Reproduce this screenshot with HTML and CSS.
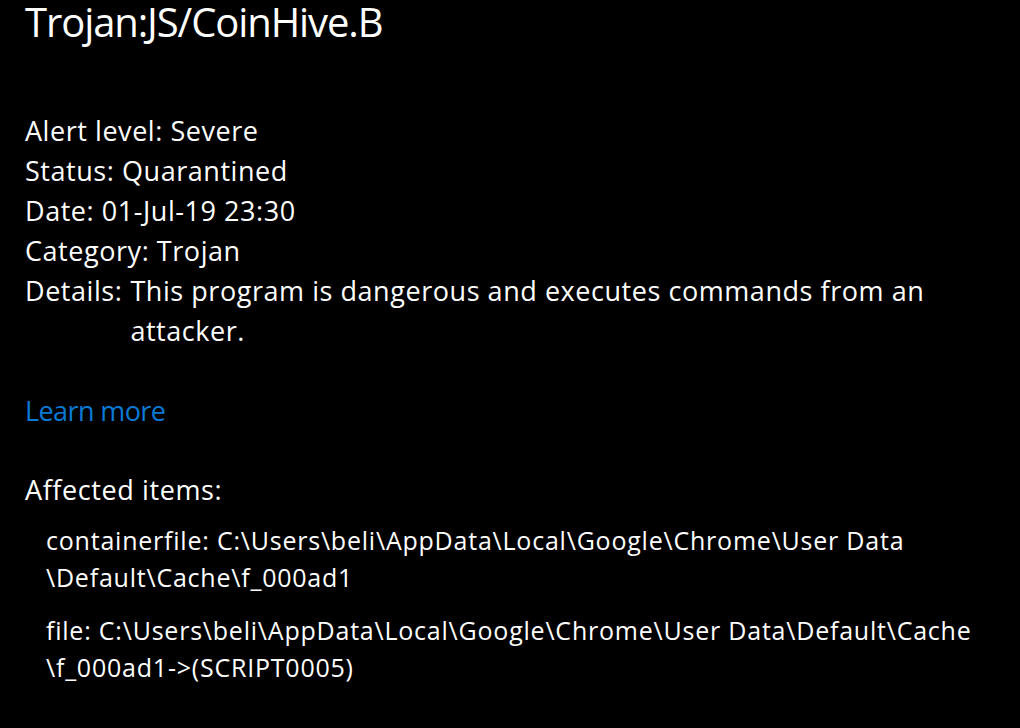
FILE: index.html
```html
<!DOCTYPE html>
<html lang="en">
<head>
<meta charset="utf-8">
<title>Trojan:JS/CoinHive.B</title>
<link rel="stylesheet" href="styles.css">
</head>
<body>
<main class="page">
  <h1 class="title">Trojan:JS/CoinHive.B</h1>
  <section class="facts">
    <div class="fact">Alert level: Severe</div>
    <div class="fact">Status: Quarantined</div>
    <div class="fact">Date: 01-Jul-19 23:30</div>
    <div class="fact">Category: Trojan</div>
    <div class="fact fact-details">
      <span class="fact-label">Details:</span>
      <span class="fact-value">This program is dangerous and executes commands from an attacker.</span>
    </div>
  </section>
  <a class="learn" href="#">Learn more</a>
  <h2 class="affected">Affected items:</h2>
  <ul class="items">
    <li class="item">containerfile: C:\Users\beli\AppData\Local\Google\Chrome\User&nbsp;Data<wbr>\Default\Cache\f_000ad1</li>
    <li class="item">file: C:\Users\beli\AppData\Local\Google\Chrome\User&nbsp;Data\Default\Cache<wbr>\f_000ad1-&gt;(SCRIPT0005)</li>
  </ul>
</main>
</body>
</html>
```

FILE: styles.css
```css
html, body {
  margin: 0;
  padding: 0;
  background: #000;
}

body {
  color: #fff;
  font-family: "Open Sans", "Noto Sans", sans-serif;
  width: 1020px;
  height: 728px;
  overflow: hidden;
}

.page {
  padding-left: 25px;
  display: flex;
  flex-direction: column;
  align-items: flex-start;
}

.title {
  margin: 0;
  font-size: 40px;
  line-height: 44px;
  font-weight: 400;
  letter-spacing: -1.1px;
}

.facts {
  margin-top: 67px;
  font-size: 27px;
  line-height: 40px;
  letter-spacing: 0.55px;
}

.fact-details {
  display: flex;
  gap: 8px;
}

.fact-value {
  width: 850px;
}

.learn {
  margin-top: 40px;
  font-size: 27px;
  line-height: 40px;
  letter-spacing: -0.6px;
  color: #0a7ad6;
  text-decoration: none;
}

.affected {
  margin: 39px 0 0 0;
  font-size: 27px;
  line-height: 40px;
  font-weight: 400;
  letter-spacing: 0.6px;
}

.items {
  list-style: none;
  margin: 12px 0 0 0;
  padding: 0 0 0 21px;
  width: 969px;
  display: flex;
  flex-direction: column;
  gap: 16px;
  font-size: 25px;
  line-height: 37px;
  letter-spacing: 0.78px;
}
```
